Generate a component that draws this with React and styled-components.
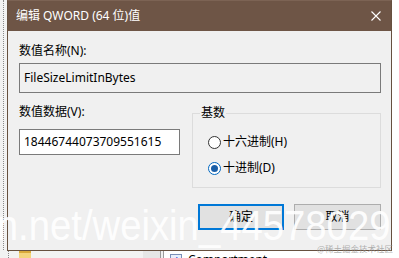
import React from "react";
import styled, { createGlobalStyle } from "styled-components";

const Global = createGlobalStyle`
  html, body { margin: 0; padding: 0; }
  body {
    width: 399px; height: 258px; overflow: hidden; background: #f0f0f0;
    font-family: "Noto Sans", "Noto Sans CJK SC", sans-serif;
  }
`;

const Screen = styled.div`
  position: relative;
  width: 399px;
  height: 258px;
  overflow: hidden;
  display: flex;
  background: #f0f0f0;
  font-family: "Noto Sans", "Noto Sans CJK SC", sans-serif;
  font-size: 12px;
`;

/* ---------- background registry editor ---------- */
const TreePane = styled.div`
  width: 143px;
  display: flex;
  background: #f2f2f2;
`;
const TreeGuide = styled.div`
  margin-left: 3px;
  border-left: 1px dotted #8a8a8a;
  height: 250px;
`;
const TreeBody = styled.div`
  display: flex;
  flex-direction: column;
  padding-top: 251px;
`;
const TreeRow = styled.div`
  display: flex;
  align-items: flex-start;
  height: 7px;
`;
const TreeStub = styled.div`
  margin-left: 4px;
  width: 1px;
  height: 7px;
  border-left: 1px dotted #8a8a8a;
`;
const Folder = styled.div`
  margin-left: 9px;
  width: 12px;
  height: 7px;
  box-sizing: border-box;
  border-top: 2px solid #d9a93a;
  background: #f4d47c;
`;
const Splitter = styled.div`
  width: 17px;
  background: #e6e6e6;
  border-right: 1px solid #9a9a9a;
`;
const ListPane = styled.div`
  flex: 1;
  background: #ffffff;
  border-left: 1px solid #9a9a9a;
  margin-left: 2px;
  display: flex;
  flex-direction: column;
  padding-top: 165px;
`;
const ListRow = styled.div`
  display: flex;
  align-items: center;
  height: 21px;
  flex: none;
  color: #000;
  white-space: nowrap;
`;
const RegIcon = styled.div`
  margin-left: 6px;
  width: 12px;
  height: 11px;
  box-sizing: border-box;
  border: 1px solid #7a8fb8;
  background: #e8eefc;
  color: #1b3fd0;
  font: bold 7px/9px "Liberation Sans", sans-serif;
  text-align: center;
`;
const NameCell = styled.div`
  width: 211px;
  padding-left: 6px;
`;
const DataCell = styled.div`
  font-family: "Liberation Sans", sans-serif;
`;

/* ---------- dialog ---------- */
const Dialog = styled.section`
  position: absolute;
  left: 7px;
  top: 0;
  width: 385px;
  height: 251px;
  box-sizing: border-box;
  border: 1px solid #66503f;
  border-top-color: #7c6354;
  background: #f0f0f0;
  display: flex;
  flex-direction: column;
  color: #000;
`;
const TitleBar = styled.header`
  height: 30px;
  flex: none;
  display: flex;
  align-items: center;
  background: #6e5546;
  color: #fff;
  padding-left: 8px;
`;
const Title = styled.div`
  flex: 1;
  line-height: 16px;
  margin-top: -1px;
`;
const CloseButton = styled.div`
  width: 30px;
  height: 30px;
  display: flex;
  align-items: center;
  justify-content: center;
`;
const Body = styled.div`
  flex: 1;
  display: flex;
  flex-direction: column;
  padding: 12px 10px 0 11px;
`;
const FieldLabel = styled.div`
  height: 16px;
  line-height: 16px;
  white-space: nowrap;
`;
const TextBox = styled.div`
  box-sizing: border-box;
  height: ${(p) => p.$h}px;
  margin-top: ${(p) => p.$mt}px;
  border: 1px solid #7a7a7a;
  background: ${(p) => (p.$readOnly ? "#f0f0f0" : "#ffffff")};
  padding-left: 4px;
  display: flex;
  align-items: center;
  white-space: nowrap;
  line-height: 16px;
`;
const DataRow = styled.div`
  display: flex;
  gap: 12px;
  margin-top: 11px;
`;
const LeftCol = styled.div`
  width: 161px;
  display: flex;
  flex-direction: column;
`;
const GroupBox = styled.div`
  width: 189px;
  height: 75px;
  box-sizing: border-box;
  margin-top: 9px;
  border: 1px solid #dcdcdc;
  display: flex;
  flex-direction: column;
`;
const Legend = styled.div`
  width: fit-content;
  margin: -8px 0 0 7px;
  padding: 0 1px;
  background: #f0f0f0;
  line-height: 14px;
  height: 14px;
`;
const RadioList = styled.div`
  display: flex;
  flex-direction: column;
  gap: 10px;
  padding: 14px 0 0 15px;
`;
const RadioRow = styled.div`
  display: flex;
  align-items: center;
  gap: 2px;
  height: 16px;
  line-height: 16px;
  white-space: nowrap;
`;
const RadioCircle = styled.div`
  width: 13px;
  height: 13px;
  box-sizing: border-box;
  border-radius: 50%;
  border: 1px solid ${(p) => (p.$checked ? "#0067c0" : "#333333")};
  background: #fff;
  display: flex;
  align-items: center;
  justify-content: center;
  &::after {
    content: "";
    display: ${(p) => (p.$checked ? "block" : "none")};
    width: 7px;
    height: 7px;
    border-radius: 50%;
    background: #1a5fa8;
  }
`;
const ButtonRow = styled.div`
  display: flex;
  justify-content: flex-end;
  gap: 10px;
  margin-top: 16px;
`;
const Button = styled.div`
  box-sizing: border-box;
  width: ${(p) => p.$w}px;
  height: 26px;
  background: #e1e1e1;
  border: ${(p) => (p.$default ? "2px solid #0078d7" : "1px solid #adadad")};
  display: flex;
  align-items: center;
  justify-content: center;
  line-height: 16px;
`;

/* ---------- watermarks ---------- */
const Watermark = styled.div`
  position: absolute;
  right: 9px;
  top: 204px;
  font-family: "Liberation Sans", sans-serif;
  font-size: 43px;
  line-height: 43px;
  white-space: nowrap;
  color: rgba(255, 255, 255, 0.92);
  transform: scaleX(0.89);
  transform-origin: right center;
  pointer-events: none;
`;
const SmallMark = styled.div`
  position: absolute;
  right: 6px;
  top: 242px;
  font-family: "Noto Sans CJK SC", sans-serif;
  font-size: 8.5px;
  line-height: 12px;
  white-space: nowrap;
  color: rgba(150, 150, 150, 0.75);
  pointer-events: none;
`;

export default function App() {
  return (
    <>
      <Global />
      <Screen>
        <TreePane>
          <TreeGuide />
          <TreeBody>
            <TreeRow>
              <TreeStub />
              <Folder />
            </TreeRow>
          </TreeBody>
        </TreePane>
        <Splitter />
        <ListPane>
          <ListRow>
            <NameCell />
            <DataCell>c</DataCell>
          </ListRow>
          <ListRow />
          <ListRow />
          <ListRow />
          <ListRow>
            <RegIcon>ab</RegIcon>
            <NameCell>Compartment</NameCell>
          </ListRow>
        </ListPane>

        <Dialog>
          <TitleBar>
            <Title>编辑 QWORD (64 位)值</Title>
            <CloseButton>
              <svg width="10" height="10" viewBox="0 0 10 10">
                <path d="M0.5 0.5 L9.5 9.5 M9.5 0.5 L0.5 9.5" stroke="#fff" strokeWidth="1.1" />
              </svg>
            </CloseButton>
          </TitleBar>
          <Body>
            <FieldLabel>数值名称(N):</FieldLabel>
            <TextBox $h={30} $mt={4} $readOnly>FileSizeLimitInBytes</TextBox>
            <DataRow>
              <LeftCol>
                <FieldLabel>数值数据(V):</FieldLabel>
                <TextBox $h={26} $mt={9}>18446744073709551615</TextBox>
              </LeftCol>
              <GroupBox>
                <Legend>基数</Legend>
                <RadioList>
                  <RadioRow>
                    <RadioCircle />
                    十六进制(H)
                  </RadioRow>
                  <RadioRow>
                    <RadioCircle $checked />
                    十进制(D)
                  </RadioRow>
                </RadioList>
              </GroupBox>
            </DataRow>
            <ButtonRow>
              <Button $w={86} $default>确定</Button>
              <Button $w={87}>取消</Button>
            </ButtonRow>
          </Body>
        </Dialog>

        <Watermark>blog.csdn.net/weixin_44578029</Watermark>
        <SmallMark>@稀土掘金技术社区</SmallMark>
      </Screen>
    </>
  );
}
